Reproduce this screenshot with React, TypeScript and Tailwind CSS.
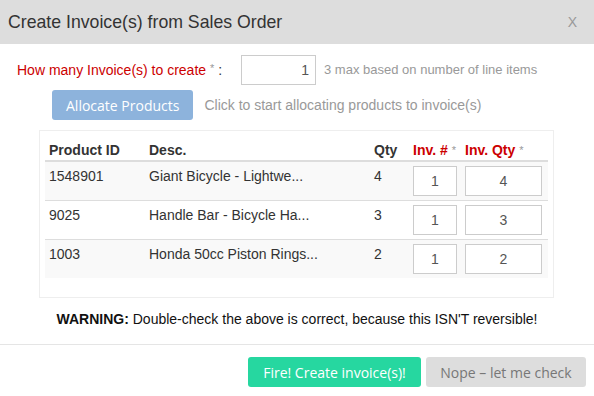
export default function App() {
  const rows = [
    { id: "1548901", desc: "Giant Bicycle - Lightwe...", qty: 4, inv: 1, invQty: 4 },
    { id: "9025", desc: "Handle Bar - Bicycle Ha...", qty: 3, inv: 1, invQty: 3 },
    { id: "1003", desc: "Honda 50cc Piston Rings...", qty: 2, inv: 1, invQty: 2 },
  ];

  return (
    <div className="w-[594px] h-[396px] bg-white text-[#333] font-['Liberation_Sans',Arial,sans-serif] overflow-hidden">
      <div className="h-[44px] bg-[#dddddd] flex items-center justify-between pl-[8px] pr-[17px]">
        <h1 className="text-[17.7px] text-[#333]">Create Invoice(s) from Sales Order</h1>
        <span className="text-[14px] text-[#999]">X</span>
      </div>

      <div className="flex items-center h-[30px] mt-[11px] pl-[17px]">
        <span className="text-[14px] text-[#c00]">
          How many Invoice(s) to create <span className="text-[#999] text-[11px] align-top">*</span>
          <span className="text-[#333]"> :</span>
        </span>
        <input
          defaultValue="1"
          className="ml-[19px] w-[75px] h-[30px] border border-[#ccc] text-right pr-[6px] text-[14px] text-[#555] outline-none"
        />
        <span className="ml-[8px] text-[13px] text-[#999]">3 max based on number of line items</span>
      </div>

      <div className="flex items-center h-[30px] mt-[5px] pl-[52px]">
        <button className="h-[30px] px-[14px] rounded-[3px] bg-[#8db3dc] text-white text-[14px] font-['Open_Sans',sans-serif]">
          Allocate Products
        </button>
        <span className="ml-[11px] text-[14px] text-[#999]">Click to start allocating products to invoice(s)</span>
      </div>

      <div className="ml-[39px] w-[515px] mt-[10px] h-[168px] border border-[#eee] px-[5px] pt-[6px]">
        <table className="w-full border-collapse text-[14px]">
          <thead>
            <tr className="border-b-2 border-[#ddd] text-left font-bold">
              <th className="w-[100px] px-[4px] pt-[3px] pb-0 leading-[20px]">Product ID</th>
              <th className="w-[225px] px-[4px] pt-[3px] pb-0 leading-[20px]">Desc.</th>
              <th className="w-[39px] px-[4px] pt-[3px] pb-0 leading-[20px]">Qty</th>
              <th className="w-[52px] px-[4px] pt-[3px] pb-0 leading-[20px] text-[#c00] whitespace-nowrap">
                Inv. # <span className="text-[#999] font-normal text-[11px] align-top">*</span>
              </th>
              <th className="px-[4px] pt-[3px] pb-0 leading-[20px] text-[#c00] whitespace-nowrap">
                Inv. Qty <span className="text-[#999] font-normal text-[11px] align-top">*</span>
              </th>
            </tr>
          </thead>
          <tbody>
            {rows.map((r, i) => (
              <tr key={r.id} className={`${i % 2 === 0 ? "bg-[#f9f9f9]" : "bg-white"} ${i < rows.length - 1 ? "border-b border-[#ddd]" : ""}`}>
                <td className="px-[4px] py-[4px] align-top leading-[20px]">{r.id}</td>
                <td className="px-[4px] py-[4px] align-top leading-[20px] whitespace-nowrap">{r.desc}</td>
                <td className="px-[4px] py-[4px] align-top leading-[20px]">{r.qty}</td>
                <td className="px-[4px] py-[4px] align-top">
                  <input
                    defaultValue={r.inv}
                    className="block w-[44px] h-[30px] border border-[#ccc] bg-white text-center text-[14px] text-[#555] outline-none"
                  />
                </td>
                <td className="px-[4px] py-[4px] align-top">
                  <input
                    defaultValue={r.invQty}
                    className="block w-[77px] h-[30px] border border-[#ccc] bg-white text-center text-[14px] text-[#555] outline-none"
                  />
                </td>
              </tr>
            ))}
          </tbody>
        </table>
      </div>

      <p className="mt-[11px] text-center text-[14px] text-[#111]">
        <b>WARNING:</b> Double-check the above is correct, because this ISN'T reversible!
      </p>

      <div className="mt-[14px] border-t border-[#e5e5e5] flex justify-end gap-[5px] pr-[8px] pt-[12px]">
        <button className="h-[30px] w-[173px] rounded-[3px] bg-[#26d7a0] text-white text-[14px] font-['Open_Sans',sans-serif]">
          Fire! Create invoice(s)!
        </button>
        <button className="h-[30px] w-[160px] rounded-[3px] bg-[#dddddd] text-[#777] text-[14px] font-['Open_Sans',sans-serif]">
          Nope – let me check
        </button>
      </div>
    </div>
  );
}
